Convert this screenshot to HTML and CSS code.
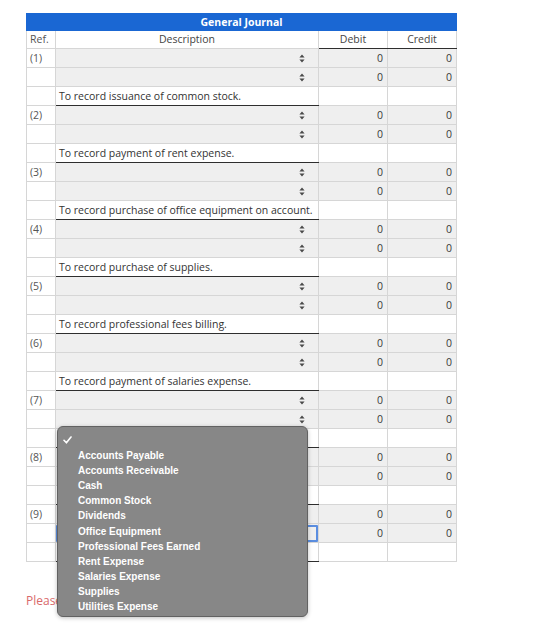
FILE: index.html
```html
<!DOCTYPE html>
<html lang="en">
<head>
<meta charset="utf-8">
<title>General Journal</title>
<link rel="stylesheet" href="styles.css">
</head>
<body>
<div class="page">
  <table class="journal">
    <colgroup>
      <col class="c-ref">
      <col class="c-desc">
      <col class="c-amt">
      <col class="c-amt">
    </colgroup>
    <thead>
      <tr class="title"><th colspan="4">General Journal</th></tr>
      <tr class="heads">
        <th class="ref">Ref.</th>
        <th class="desc">Description</th>
        <th class="amt">Debit</th>
        <th class="amt">Credit</th>
      </tr>
    </thead>
    <tbody id="entries"></tbody>
  </table>

  <p class="warn">Please complete all entries.</p>

  <div class="menu">
    <div class="opt checked"><svg class="tick" width="9" height="8" viewBox="0 0 9 8"><path d="M1 4.3 L3.4 6.8 L8 1" fill="none" stroke="#fff" stroke-width="1.6" stroke-linecap="round" stroke-linejoin="round"/></svg></div>
    <div class="opt">Accounts Payable</div>
    <div class="opt">Accounts Receivable</div>
    <div class="opt">Cash</div>
    <div class="opt">Common Stock</div>
    <div class="opt">Dividends</div>
    <div class="opt">Office Equipment</div>
    <div class="opt">Professional Fees Earned</div>
    <div class="opt">Rent Expense</div>
    <div class="opt">Salaries Expense</div>
    <div class="opt">Supplies</div>
    <div class="opt">Utilities Expense</div>
  </div>
</div>
<script src="app.js"></script>
</body>
</html>
```

FILE: app.js
```js
// Builds the journal body: two account lines and one memo line per entry.
const memos = [
  "To record issuance of common stock.",
  "To record payment of rent expense.",
  "To record purchase of office equipment on account.",
  "To record purchase of supplies.",
  "To record professional fees billing.",
  "To record payment of salaries expense.",
  "",
  "",
  ""
];

const arrows =
  '<svg class="arrows" width="6" height="9" viewBox="0 0 6 9">' +
  '<path d="M3 0.5 L5.6 3.6 L0.4 3.6 Z M3 8.5 L5.6 5.4 L0.4 5.4 Z" fill="#4a4a4a"/></svg>';

const body = document.getElementById("entries");
let html = "";
memos.forEach((memo, i) => {
  for (let line = 0; line < 2; line++) {
    const focused = i === 8 && line === 1 ? " focused" : "";
    html +=
      '<tr class="line">' +
      '<td class="ref">' + (line === 0 ? "(" + (i + 1) + ")" : "") + "</td>" +
      '<td class="acct"><div class="pick' + focused + '">' + arrows + "</div></td>" +
      '<td class="num">0</td><td class="num">0</td></tr>';
  }
  html +=
    '<tr class="note"><td class="ref"></td><td class="memo">' + memo +
    '</td><td class="blank"></td><td class="blank"></td></tr>';
});
body.innerHTML = html;
```

FILE: styles.css
```css
html, body {
  margin: 0;
  background: #fff;
}

.page {
  position: relative;
  min-height: 623px;
  box-sizing: border-box;
  padding: 13px 0 0 26px;
  font-family: "Open Sans", "Liberation Sans", sans-serif;
  color: #333;
}

.journal {
  border-collapse: collapse;
  table-layout: fixed;
  width: 431px;
  font-size: 10.5px;
}

.c-ref { width: 29px; }
.c-desc { width: 263px; }
.c-amt { width: 69px; }

.journal th,
.journal td {
  border: 1px solid #d6d6d6;
  padding: 0;
  height: 18px;
  line-height: 18px;
  white-space: nowrap;
  overflow: hidden;
}

.title th {
  background: #1a67d3;
  border-color: #1a67d3;
  color: #fff;
  font-weight: 700;
  font-size: 10.5px;
  height: 16px;
  line-height: 16px;
  text-align: center;
}

.heads th {
  font-weight: 400;
  color: #444;
  height: 17px;
  line-height: 17px;
}

.heads th.ref {
  text-align: left;
  padding-left: 3px;
  color: #555;
}

.heads th.desc { text-align: center; }

.heads th.amt {
  text-align: center;
  border-bottom: 1px solid #2e2e2e;
}

td.ref {
  padding-left: 3px;
  color: #555;
  background: #fff;
}

td.acct {
  background: #efefef;
}

.pick {
  display: flex;
  justify-content: flex-end;
  align-items: center;
  height: 17px;
  padding-right: 13px;
  box-sizing: border-box;
}

.pick.focused {
  box-shadow: inset 0 0 0 2px #5b8ee0;
  border-radius: 1px;
}

.arrows {
  display: block;
}

td.num {
  background: #efefef;
  text-align: right;
  padding-right: 4px;
  color: #3a3a3a;
}

td.memo {
  background: #fff;
  padding-left: 3px;
  border-bottom: 1px solid #2e2e2e;
  color: #333;
}

td.blank { background: #fff; }

.warn {
  margin: 30px 0 0;
  font-size: 12px;
  color: #d9696a;
}

/* Open account picker, floating over the journal */
.menu {
  position: absolute;
  left: 57px;
  top: 426px;
  width: 251px;
  height: 191px;
  box-sizing: border-box;
  padding: 6px 0 4px;
  background: #878787;
  border: 1px solid #626262;
  border-radius: 6px;
  box-shadow: 0 1px 4px rgba(0, 0, 0, 0.25);
  font-family: "Liberation Sans", Arial, sans-serif;
  font-weight: 700;
  font-size: 10px;
  color: #fff;
}

.opt {
  height: 15.1px;
  line-height: 15.1px;
  padding-left: 20px;
  position: relative;
}

.tick {
  position: absolute;
  left: 5px;
  top: 3px;
}
```
